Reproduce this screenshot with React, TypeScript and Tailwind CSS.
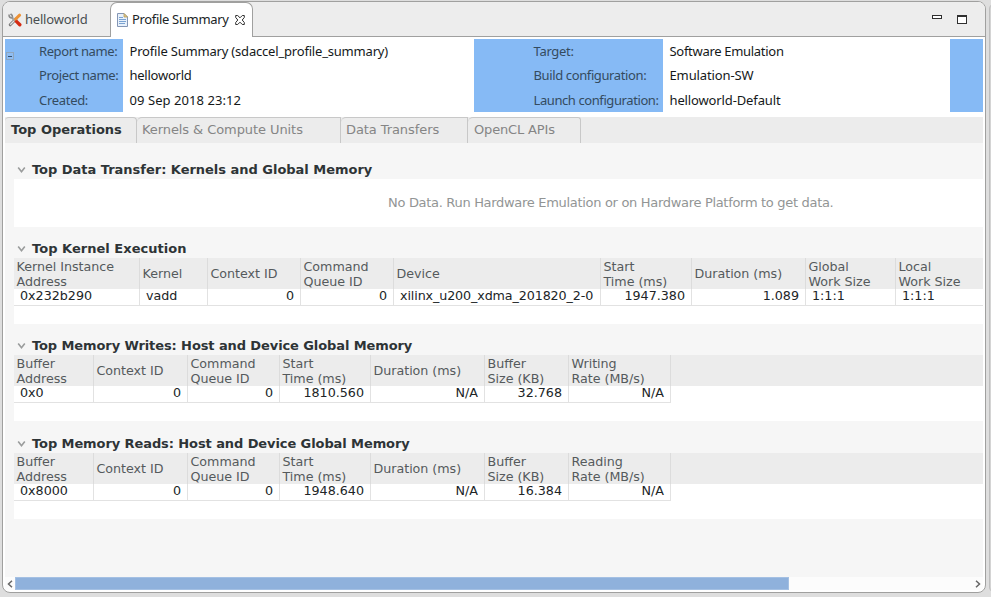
import React from "react";

type Column = { label: string[]; width: string; value: string; align?: "right"; tracking?: string };
type Line = { text: string; tracking: string };

const KERNEL_COLUMNS: Column[] = [
  { label: ["Kernel Instance", "Address"], width: "w-[126px]", value: "0x232b290" },
  { label: ["Kernel"], width: "w-[68px]", value: "vadd" },
  { label: ["Context ID"], width: "w-[93px]", value: "0", align: "right" },
  { label: ["Command", "Queue ID"], width: "w-[93px]", value: "0", align: "right" },
  { label: ["Device"], width: "w-[207px]", value: "xilinx_u200_xdma_201820_2-0", tracking: "tracking-[-0.11px]" },
  { label: ["Start", "Time (ms)"], width: "w-[91px]", value: "1947.380", align: "right" },
  { label: ["Duration (ms)"], width: "w-[114px]", value: "1.089", align: "right" },
  { label: ["Global", "Work Size"], width: "w-[90px]", value: "1:1:1" },
  { label: ["Local", "Work Size"], width: "w-[96px]", value: "1:1:1" },
];

function memoryColumns(address: string, start: string, size: string, rate: string): Column[] {
  return [
    { label: ["Buffer", "Address"], width: "w-[80px]", value: address },
    { label: ["Context ID"], width: "w-[94px]", value: "0", align: "right" },
    { label: ["Command", "Queue ID"], width: "w-[92px]", value: "0", align: "right" },
    { label: ["Start", "Time (ms)"], width: "w-[91px]", value: start, align: "right" },
    { label: ["Duration (ms)"], width: "w-[114px]", value: "N/A", align: "right" },
    { label: ["Buffer", "Size (KB)"], width: "w-[84px]", value: size, align: "right" },
    { label: [rate, "Rate (MB/s)"], width: "w-[102px]", value: "N/A", align: "right" },
  ];
}

function Section({ title, tracking = "", children }: { title: string; tracking?: string; children: React.ReactNode }) {
  return (
    <section className="pl-[9px]">
      <h2 className={`flex h-[19px] items-center text-[13px] font-bold leading-[19px] text-[#2e3436] ${tracking}`}>
        <svg className="ml-[3px] mr-[6px] h-[9px] w-[9px]" viewBox="0 0 9 9" fill="none" stroke="#9a9c9c" strokeWidth="1.6">
          <path d="M1.2 2.5 4.5 6.8 7.8 2.5" />
        </svg>
        {title}
      </h2>
      {children}
    </section>
  );
}

function Table({ columns }: { columns: Column[] }) {
  return (
    <div className="h-[66px] overflow-hidden bg-white text-[12.7px]">
      <div className="flex h-[31px] bg-[#ececec] text-[#555a5c]">
        {columns.map((c, i) => (
          <div key={i} className={`${c.width} flex shrink-0 flex-col justify-center whitespace-nowrap border-r border-[#dcdcdc] pl-[2.5px] leading-[15px] tracking-[-0.03px]`}>
            {c.label.map((l) => (
              <span key={l}>{l}</span>
            ))}
          </div>
        ))}
      </div>
      <div className="flex h-[17px] text-[#202426]">
        {columns.map((c, i) => (
          <div
            key={i}
            className={`${c.width} shrink-0 whitespace-nowrap border-b border-r border-[#e2e2e2] pl-[6px] pr-[6px] leading-[14px] ${c.align === "right" ? "text-right" : ""} ${c.tracking ?? ""}`}
          >
            {c.value}
          </div>
        ))}
      </div>
    </div>
  );
}

function InfoLines({ lines, className }: { lines: Line[]; className: string }) {
  return (
    <div className={`flex shrink-0 flex-col whitespace-nowrap ${className}`}>
      {lines.map((l) => (
        <span key={l.text} className={`h-[24.6px] leading-[24px] ${l.tracking}`}>{l.text}</span>
      ))}
    </div>
  );
}

export default function App() {
  return (
    <div className="flex h-[597px] w-[991px] overflow-hidden bg-[#dedede] pl-[2px] pt-[1px] font-['DejaVu_Sans',sans-serif]">
      <div className="flex h-[592px] w-[984px] shrink-0 flex-col overflow-hidden rounded-[8px] border border-[#a0a09f] bg-white">
        <div className="flex h-[35px] shrink-0 bg-[#ededed] font-['Noto_Sans',sans-serif] text-[13px]">
          <div className="flex w-[107px] items-center border-b border-[#a0a09f] pl-[5px] pt-[2px] text-[#4a4f51]">
            <svg className="mr-[3px] h-[14px] w-[14px] shrink-0" viewBox="0 0 14 14" fill="none">
              <path d="M2.2 11.8 8 6" stroke="#777" strokeWidth="3" strokeLinecap="round" />
              <path d="M2.2 11.8 8 6" stroke="#e4e4e4" strokeWidth="1.3" />
              <path d="M1 1.5 Q1 5 4 5 L6 7 M2.5 .8 4.2 2.4 4.5 4.5" stroke="#8b8b8b" strokeWidth="1.6" />
              <path d="M5 5 9 9" stroke="#aaa" strokeWidth="2" />
              <path d="M8.4 8.4 11.8 11.8" stroke="#d52b12" strokeWidth="3.4" strokeLinecap="round" />
              <path d="M7.6 6 11.6 2.2" stroke="#ed9235" strokeWidth="3" strokeLinecap="round" />
            </svg>
            <span className="tracking-[-0.2px]">helloworld</span>
          </div>
          <div className="flex w-[143px] items-center rounded-t-[7px] border-l border-r border-t border-[#a0a09f] bg-white pl-[6px] text-[#202426]">
            <svg className="mr-[4px] h-[14px] w-[11px] shrink-0" viewBox="0 0 11 14" fill="none">
              <path d="M.5.5H7L10.5 4v9.5H.5z" fill="#e8f1fb" stroke="#8496b5" />
              <path d="M7 .5V4h3.5z" fill="#e6cb85" stroke="#b39a5c" strokeWidth=".8" />
              <path d="M2 4.5h4M2 6.5h7M2 8.5h7M2 10.5h6" stroke="#7ba3d2" />
            </svg>
            <span className="whitespace-nowrap tracking-[-0.33px]">Profile Summary</span>
            <svg className="ml-[6px] h-[10px] w-[10px] shrink-0" viewBox="0 0 10 10" fill="none" stroke="#303030">
              <path d="M.7.5h2L5 2.8 7.3.5h2v2L7.2 5l2.1 2.5v2h-2L5 7.2 2.7 9.5h-2v-2L2.8 5 .7 2.5z" />
            </svg>
          </div>
          <div className="flex flex-1 items-start justify-end gap-[15px] border-b border-[#a0a09f] pr-[18px] pt-[13px]">
            <div className="h-[4px] w-[10px] border border-[#303030] bg-white" />
            <div className="h-[9px] w-[10px] border border-t-2 border-[#303030] bg-white" />
          </div>
        </div>

        <div className="ml-[2px] mt-[2px] flex h-[73px] w-[978px] shrink-0 font-['Noto_Sans',sans-serif] text-[13px] text-[#15191a]">
          <div className="flex w-[118px] shrink-0 bg-[#86baf5] text-[#344b5f]">
            <div className="ml-px mt-[13px] flex h-[8px] w-[8px] shrink-0 items-center justify-center border border-[#8fa6be] bg-[#8fbdf3]">
              <div className="h-px w-[4px] bg-[#34516e]" />
            </div>
            <InfoLines
              className="ml-[25px]"
              lines={[
                { text: "Report name:", tracking: "tracking-[-0.4px]" },
                { text: "Project name:", tracking: "tracking-[-0.37px]" },
                { text: "Created:", tracking: "tracking-[-0.3px]" },
              ]}
            />
          </div>
          <InfoLines
            className="w-[351px] pl-[6.5px]"
            lines={[
              { text: "Profile Summary (sdaccel_profile_summary)", tracking: "tracking-[-0.19px]" },
              { text: "helloworld", tracking: "tracking-[-0.25px]" },
              { text: "09 Sep 2018 23:12", tracking: "tracking-[0.06px]" },
            ]}
          />
          <InfoLines
            className="w-[189px] bg-[#86baf5] pl-[59.5px] text-[#344b5f]"
            lines={[
              { text: "Target:", tracking: "tracking-[-0.3px]" },
              { text: "Build configuration:", tracking: "tracking-[-0.38px]" },
              { text: "Launch configuration:", tracking: "tracking-[-0.41px]" },
            ]}
          />
          <InfoLines
            className="w-[287px] pl-[6.5px]"
            lines={[
              { text: "Software Emulation", tracking: "tracking-[-0.3px]" },
              { text: "Emulation-SW", tracking: "tracking-[-0.12px]" },
              { text: "helloworld-Default", tracking: "tracking-[-0.13px]" },
            ]}
          />
          <div className="flex-1 bg-[#86baf5]" />
        </div>

        <div className="ml-[2px] mt-[5px] flex h-[26px] w-[978px] shrink-0 whitespace-nowrap bg-[#ececec] text-[13px] leading-[24px] text-[#858585]">
          <div className="w-[132px] rounded-t-[4px] border-r border-t border-[#c8c8c8] pl-[6px] font-bold text-[#2e3436]">Top Operations</div>
          <div className="w-[204px] rounded-tl-[5px] border-r border-t border-[#c8c8c8] pl-[5px] tracking-[-0.08px]">Kernels &amp; Compute Units</div>
          <div className="w-[127px] rounded-tl-[5px] border-r border-t border-[#c8c8c8] pl-[5px] tracking-[-0.08px]">Data Transfers</div>
          <div className="w-[113px] rounded-tl-[5px] rounded-tr-[3px] border-r border-t border-[#c8c8c8] pl-[6px] tracking-[-0.15px]">OpenCL APIs</div>
        </div>

        <div className="ml-[2px] flex h-[434px] w-[978px] shrink-0 flex-col bg-[#f6f6f6] pt-[17px]">
          <Section title="Top Data Transfer: Kernels and Global Memory" tracking="tracking-[-0.02px]">
            <div className="h-[48px] bg-white pl-[374px] text-[13px] leading-[47px] tracking-[-0.31px] text-[#929595]">
              No Data. Run Hardware Emulation or on Hardware Platform to get data.
            </div>
          </Section>
          <div className="h-[12px]" />
          <Section title="Top Kernel Execution" tracking="tracking-[0.03px]">
            <Table columns={KERNEL_COLUMNS} />
          </Section>
          <div className="h-[12px]" />
          <Section title="Top Memory Writes: Host and Device Global Memory" tracking="tracking-[-0.1px]">
            <Table columns={memoryColumns("0x0", "1810.560", "32.768", "Writing")} />
          </Section>
          <div className="h-[13px]" />
          <Section title="Top Memory Reads: Host and Device Global Memory" tracking="tracking-[-0.09px]">
            <Table columns={memoryColumns("0x8000", "1948.640", "16.384", "Reading")} />
          </Section>
        </div>

        <div className="ml-[2px] flex h-[13px] w-[978px] shrink-0 items-center bg-[#fcfcfc]">
          <svg className="ml-[2px] mr-[2px] h-[8px] w-[6px]" viewBox="0 0 6 8" fill="none" stroke="#666" strokeWidth="1.5">
            <path d="M5 .8 1.5 4 5 7.2" />
          </svg>
          <div className="h-[13px] w-[774px] border border-[#a4c0e3] bg-[#8fb1dc]" />
          <svg className="ml-auto mr-[2px] h-[8px] w-[6px]" viewBox="0 0 6 8" fill="none" stroke="#666" strokeWidth="1.5">
            <path d="M1 .8 4.5 4 1 7.2" />
          </svg>
        </div>
      </div>
      <div className="ml-[3px] mt-[2px] h-[590px] w-[12px] shrink-0 rounded-l-[6px] border border-[#bebebe] bg-[#d4d4d4]" />
    </div>
  );
}
